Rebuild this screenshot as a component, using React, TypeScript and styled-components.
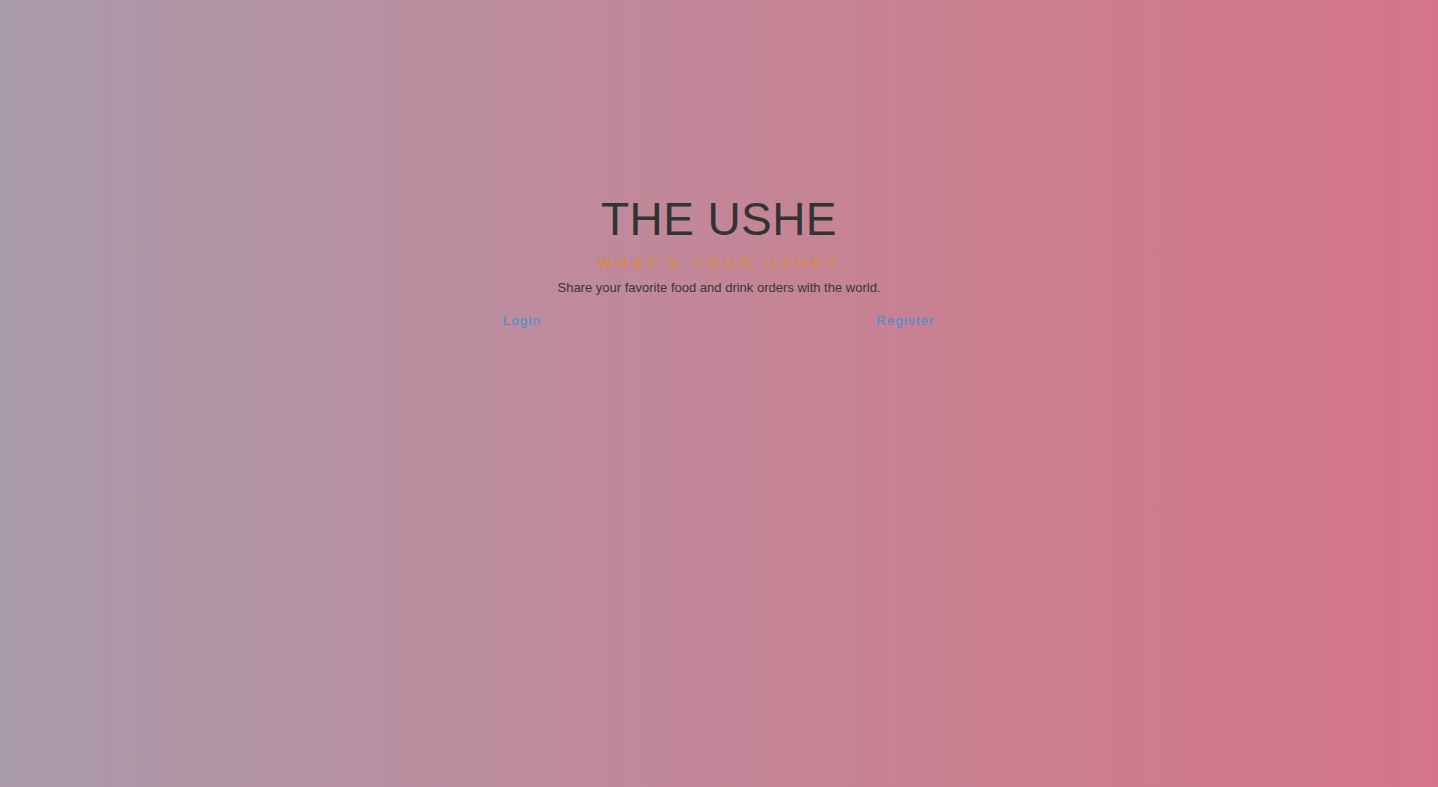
import React from "react";
import styled, { createGlobalStyle } from "styled-components";

const Global = createGlobalStyle`
  html, body { margin: 0; padding: 0; height: 100%; }
  body { font-family: "Liberation Sans", Arial, sans-serif; }
  #root { height: 100%; }
`;

const Page = styled.main`
  min-height: 787px;
  height: 100vh;
  background: linear-gradient(to right, #aa9baa 0%, #bf8a9c 40%, #ca7f90 70%, #d57589 100%);
  display: flex;
  justify-content: center;
  padding-top: 196px;
  box-sizing: border-box;
`;

const Hero = styled.section`
  width: 432px;
  display: flex;
  flex-direction: column;
  align-items: center;
  text-align: center;
`;

const Title = styled.h1`
  margin: 0;
  font-size: 46px;
  font-weight: 400;
  line-height: 46px;
  letter-spacing: 0.4px;
  color: #333333;
`;

const Tagline = styled.h2`
  margin: 12px 0 0;
  font-size: 15px;
  font-weight: 400;
  line-height: 18px;
  letter-spacing: 5px;
  color: #dc8a36;
`;

const Blurb = styled.p`
  margin: 7px 0 0;
  font-size: 13px;
  line-height: 18px;
  color: #3a3538;
`;

const Links = styled.nav`
  align-self: stretch;
  display: flex;
  justify-content: space-between;
  margin-top: 16px;
`;

const NavLink = styled.a`
  font-size: 13px;
  letter-spacing: 1.3px;
  color: #3c8fdc;
  text-decoration: none;
  line-height: 16px;
`;

export default function App() {
  return (
    <>
      <Global />
      <Page>
        <Hero>
          <Title>THE USHE</Title>
          <Tagline>WHAT'S YOUR USHE?</Tagline>
          <Blurb>Share your favorite food and drink orders with the world.</Blurb>
          <Links>
            <NavLink href="#">Login</NavLink>
            <NavLink href="#">Register</NavLink>
          </Links>
        </Hero>
      </Page>
    </>
  );
}
